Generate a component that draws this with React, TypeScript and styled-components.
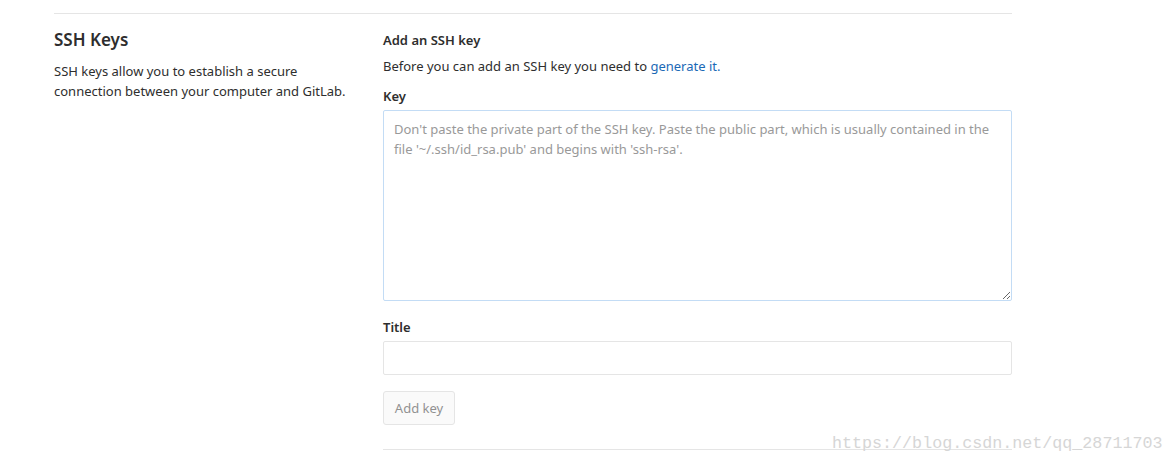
import styled, { createGlobalStyle } from 'styled-components';

const GlobalStyle = createGlobalStyle`
  html, body {
    margin: 0;
    padding: 0;
    background: #fff;
  }
  body {
    font-family: 'Noto Sans', 'Open Sans', sans-serif;
    color: #2e2e2e;
  }
`;

const App = () => {
  return (
    <Page>
      <GlobalStyle />
      <Section>
        <Intro>
          <h4>SSH Keys</h4>
          <p>
            SSH keys allow you to establish a secure
            <br />
            connection between your computer and GitLab.
          </p>
        </Intro>
        <Form>
          <h5>Add an SSH key</h5>
          <Lead>
            Before you can add an SSH key you need to <a href='#'>generate it.</a>
          </Lead>
          <Field gap={17}>
            <label htmlFor='key'>Key</label>
            <KeyArea
              id='key'
              placeholder="Don't paste the private part of the SSH key. Paste the public part, which is usually contained in the file '~/.ssh/id_rsa.pub' and begins with 'ssh-rsa'."
            />
          </Field>
          <Field gap={16}>
            <label htmlFor='title'>Title</label>
            <TitleInput id='title' type='text' />
          </Field>
          <Actions>
            <AddButton disabled>Add key</AddButton>
          </Actions>
        </Form>
      </Section>
      <Watermark>https://blog.csdn.net/qq_28711703</Watermark>
    </Page>
  );
};

export default App;

const Page = styled.div`
  position: relative;
  width: 1173px;
  height: 464px;
  overflow: hidden;
  padding: 13px 0 0 54px;
  box-sizing: border-box;
`;

const Section = styled.div`
  display: flex;
  width: 958px;
  border-top: 1px solid #e5e5e5;
  padding-top: 17px;
`;

const Intro = styled.div`
  width: 329px;
  h4 {
    margin: -3px 0 9px;
    font-size: 17px;
    font-weight: 600;
    line-height: 24px;
  }
  p {
    margin: 0;
    font-size: 13px;
    line-height: 20px;
  }
`;

const Form = styled.div`
  flex: 1;
  display: flex;
  flex-direction: column;
  h5 {
    margin: 0 0 8px;
    font-size: 13px;
    font-weight: 600;
    line-height: 18px;
  }
`;

const Lead = styled.p`
  margin: 0 0 12px;
  font-size: 13px;
  line-height: 18px;
  a {
    color: #1b69b6;
    text-decoration: none;
  }
`;

const Field = styled.div<{ gap: number }>`
  display: flex;
  flex-direction: column;
  margin-bottom: ${({ gap }) => gap}px;
  label {
    font-size: 13px;
    font-weight: 600;
    line-height: 18px;
    margin-bottom: 5px;
  }
`;

const KeyArea = styled.textarea`
  height: 191px;
  box-sizing: border-box;
  border: 1px solid #c3dcf5;
  border-radius: 2px;
  padding: 8px 10px;
  font-family: inherit;
  font-size: 13px;
  line-height: 20px;
  color: #2e2e2e;
  resize: vertical;
  outline: none;
  &::placeholder {
    color: #999;
  }
`;

const TitleInput = styled.input`
  height: 34px;
  box-sizing: border-box;
  border: 1px solid #e5e5e5;
  border-radius: 2px;
  padding: 6px 10px;
  font-family: inherit;
  font-size: 13px;
  outline: none;
`;

const Actions = styled.div`
  display: flex;
  padding-bottom: 24px;
  border-bottom: 1px solid #e5e5e5;
`;

const AddButton = styled.button`
  height: 34px;
  width: 72px;
  box-sizing: border-box;
  border: 1px solid #e5e5e5;
  border-radius: 3px;
  background: #fafafa;
  color: #919191;
  font-family: inherit;
  font-size: 13px;
  padding: 0;
`;

const Watermark = styled.div`
  position: absolute;
  left: 832px;
  top: 433px;
  font-family: 'Liberation Mono', monospace;
  font-size: 16.7px;
  line-height: 22px;
  color: #d6d6d6;
`;
